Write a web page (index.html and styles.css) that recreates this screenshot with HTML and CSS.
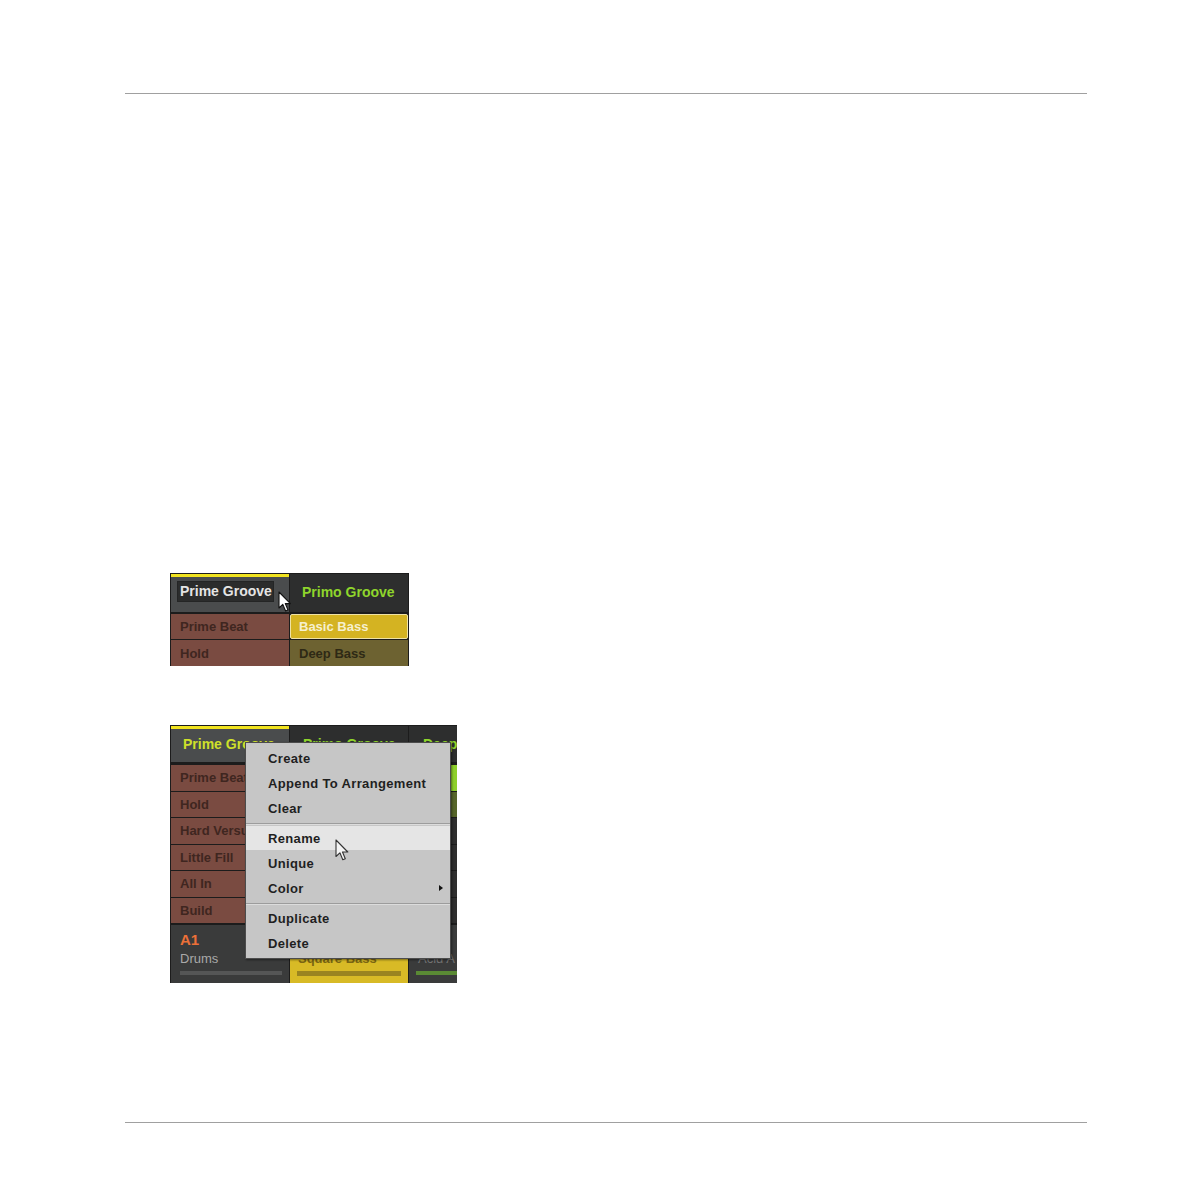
FILE: index.html
```html
<!DOCTYPE html>
<html>
<head>
<meta charset="utf-8">
<link rel="stylesheet" href="styles.css">
</head>
<body>
<div class="page">
  <div class="rule rule-top"></div>

  <div class="shot shot1">
    <div class="col c1">
      <div class="hd hd-sel"><span class="field">Prime Groove</span></div>
      <div class="cell brown r1">Prime Beat</div>
      <div class="cell brown r2">Hold</div>
    </div>
    <div class="col c2">
      <div class="hd hd-dark"><span class="hname green">Primo Groove</span></div>
      <div class="cell yellow-sel r1">Basic Bass</div>
      <div class="cell olive r2">Deep Bass</div>
    </div>
    <svg class="cursor cursor1" width="14" height="22" viewBox="0 0 14 22"><path d="M1 1 L1 17 L4.8 13.4 L7.6 20 L10 19 L7.3 12.6 L12.4 12.6 Z" fill="#fff" stroke="#111" stroke-width="1.1" stroke-linejoin="round"/></svg>
  </div>

  <div class="shot shot2">
    <div class="col k1">
      <div class="hd2 hd-sel"><span class="hname lime">Prime Groove</span></div>
      <div class="rows">
        <div class="cell2 brown">Prime Beat</div>
        <div class="cell2 brown">Hold</div>
        <div class="cell2 brown">Hard Versus</div>
        <div class="cell2 brown">Little Fill</div>
        <div class="cell2 brown">All In</div>
        <div class="cell2 brown">Build</div>
      </div>
      <div class="grp grp-dark">
        <span class="gname orange">A1</span>
        <span class="gsub">Drums</span>
        <span class="gbar gbar-gray"></span>
      </div>
    </div>
    <div class="col k2">
      <div class="hd2 hd-dark"><span class="hname green">Primo Groove</span></div>
      <div class="rows">
        <div class="cell2 yellow">Basic Bass</div>
        <div class="cell2 olive">Deep Bass</div>
        <div class="cell2 dark"></div>
        <div class="cell2 dark"></div>
        <div class="cell2 dark"></div>
        <div class="cell2 dark"></div>
      </div>
      <div class="grp grp-yellow">
        <span class="gname dim">B1</span>
        <span class="gsub sq">Square Bass</span>
        <span class="gbar gbar-olive"></span>
      </div>
    </div>
    <div class="col k3">
      <div class="hd2 hd-dark"><span class="hname green">Deep</span></div>
      <div class="rows">
        <div class="cell2 bright"></div>
        <div class="cell2 olive-g"></div>
        <div class="cell2 dark"></div>
        <div class="cell2 dark"></div>
        <div class="cell2 dark"></div>
        <div class="cell2 dark"></div>
      </div>
      <div class="grp grp-dark">
        <span class="gname dim2">C1</span>
        <span class="gsub acid">Acid A</span>
        <span class="gbar gbar-green"></span>
      </div>
    </div>

    <div class="menu">
      <div class="item">Create</div>
      <div class="item">Append To Arrangement</div>
      <div class="item">Clear</div>
      <div class="sep"></div>
      <div class="item item-hi">Rename</div>
      <div class="item">Unique</div>
      <div class="item item-sub">Color<span class="tri"></span></div>
      <div class="sep"></div>
      <div class="item">Duplicate</div>
      <div class="item">Delete</div>
    </div>
    <svg class="cursor cursor2" width="15" height="23" viewBox="0 0 15 23"><path d="M1 1 L1 17.5 L4.9 13.8 L7.8 20.8 L10.3 19.8 L7.5 13 L12.8 13 Z" fill="#f4f4f4" stroke="#333" stroke-width="1.1" stroke-linejoin="round"/></svg>
  </div>

  <div class="rule rule-bottom"></div>
</div>
</body>
</html>
```

FILE: styles.css
```css
html, body {
  margin: 0;
  padding: 0;
  background: #ffffff;
}
body {
  font-family: "Liberation Sans", Arial, sans-serif;
  width: 1191px;
  height: 1191px;
  overflow: hidden;
}
.page {
  display: flex;
  flex-direction: column;
}
.rule {
  height: 1px;
  background: #a0a0a0;
  margin-left: 125px;
  width: 962px;
}
.rule-top {
  margin-top: 93px;
}
.rule-bottom {
  margin-top: 139px;
}

/* ---------- shared ---------- */
.shot {
  position: relative;
  margin-left: 170px;
  background: #1c1c1c;
  display: flex;
  gap: 1px;
  padding-left: 1px;
  padding-top: 1px;
  box-sizing: border-box;
  overflow: hidden;
}
.col {
  display: flex;
  flex-direction: column;
}
.hname {
  font-weight: bold;
  font-size: 14px;
  white-space: nowrap;
}
.green { color: #8fd52c; }
.lime { color: #cfe02a; }
.orange { color: #ec7038; }

.brown { background: #7a4b41; color: #3f2620; }
.olive { background: #6d6231; color: #2e2915; }
.dark { background: #2e2e2e; }
.bright { background: #8dcf2b; }
.olive-g { background: #56652a; }
.yellow { background: #d7b624; color: #f5efc9; }

.hd-sel {
  background: #4a4c4d;
  border-top: 3px solid #f1e31f;
  box-sizing: border-box;
}
.hd-dark {
  background: #2d2e2e;
}

/* ---------- shot 1 ---------- */
.shot1 {
  margin-top: 479px;
  width: 239px;
  height: 93px;
  padding-right: 1px;
}
.shot1 .col {
  width: 118px;
}
.shot1 .hd {
  height: 38px;
  margin-bottom: 2px;
  display: flex;
  align-items: center;
  box-sizing: border-box;
}
.shot1 .hd-sel {
  align-items: flex-start;
}
.field {
  margin-top: 4px;
  margin-left: 6px;
  width: 97px;
  height: 21px;
  box-sizing: border-box;
  background: #2b2c2c;
  border: 1px solid #242525;
  color: #e4e4e4;
  font-weight: bold;
  font-size: 14px;
  line-height: 19px;
  padding-left: 2px;
  white-space: nowrap;
  overflow: hidden;
}
.shot1 .hd-dark {
  padding-bottom: 2px;
}
.shot1 .hd-dark .hname {
  margin-left: 12px;
}
.cell {
  font-weight: bold;
  font-size: 13px;
  padding-left: 9px;
  display: flex;
  align-items: center;
  white-space: nowrap;
  overflow: hidden;
  box-sizing: border-box;
}
.cell.r1 { height: 25px; margin-bottom: 1px; }
.cell.r2 { height: 26px; }
.yellow-sel {
  background: #d4b322;
  color: #f6f0cf;
  border: 1px solid #efe2a4;
  border-radius: 2px;
  padding-left: 8px;
}
.cursor {
  position: absolute;
}
.cursor1 {
  left: 108px;
  top: 18px;
}

/* ---------- shot 2 ---------- */
.shot2 {
  margin-top: 59px;
  width: 287px;
  height: 258px;
}
.k1, .k2 { width: 118px; }
.k3 { width: 48px; }
.hd2 {
  height: 36px;
  margin-bottom: 3px;
  display: flex;
  align-items: center;
  padding-left: 13px;
  box-sizing: border-box;
  overflow: hidden;
}
.k1 .hd2 { padding-left: 12px; padding-bottom: 4px; }
.k3 .hd2 { padding-left: 14px; }
.rows {
  height: 158px;
  display: grid;
  grid-template-rows: repeat(6, 1fr);
  row-gap: 1px;
  margin-bottom: 2px;
}
.cell2 {
  font-weight: bold;
  font-size: 13px;
  padding-left: 9px;
  display: flex;
  align-items: center;
  white-space: nowrap;
  overflow: hidden;
}
.grp {
  flex: 1;
  position: relative;
  display: flex;
  flex-direction: column;
  padding-left: 9px;
  overflow: hidden;
  white-space: nowrap;
}
.grp-dark { background: #3a3b3b; }
.grp-yellow { background: #d8ba26; padding-left: 8px; }
.gname {
  font-weight: bold;
  font-size: 15px;
  margin-top: 7px;
  line-height: 16px;
}
.dim { color: #8c7616; }
.dim2 { color: #6b6b6b; }
.gsub {
  font-size: 13px;
  color: #a9a9a9;
  margin-top: 3px;
  line-height: 15px;
}
.sq { color: #7a6612; font-weight: bold; }
.acid { color: #737373; }
.gbar {
  position: absolute;
  left: 9px;
  right: 7px;
  top: 46px;
  height: 4px;
}
.gbar-gray { background: #555656; }
.gbar-olive { left: 7px; right: 7px; height: 5px; background: #9a8420; }
.gbar-green { left: 6px; right: 0; background: #5a8a34; border-left: 1px solid #3b3b3b; }

/* ---------- menu ---------- */
.menu {
  position: absolute;
  left: 75px;
  top: 17px;
  width: 206px;
  height: 217px;
  box-sizing: border-box;
  background: #c6c6c6;
  border: 1px solid #4c4c4c;
  box-shadow: 1px 1px 2px rgba(0, 0, 0, 0.45);
  padding-top: 3px;
  display: flex;
  flex-direction: column;
}
.item {
  height: 25px;
  display: flex;
  align-items: center;
  padding-left: 22px;
  font-weight: bold;
  font-size: 13px;
  letter-spacing: 0.35px;
  color: #1f1f1f;
  white-space: nowrap;
  position: relative;
}
.item-hi {
  background: #e5e5e5;
  height: 24px;
  margin-bottom: 1px;
}
.sep {
  height: 5px;
  box-sizing: border-box;
  border-top: 2px solid #c6c6c6;
  border-bottom: 1px solid #c6c6c6;
  background: linear-gradient(#9c9c9c 0 1px, #dcdcdc 1px 2px);
}
.tri {
  position: absolute;
  right: 7px;
  top: 9px;
  width: 0;
  height: 0;
  border-top: 3.5px solid transparent;
  border-bottom: 3.5px solid transparent;
  border-left: 4px solid #111;
}
.cursor2 {
  left: 165px;
  top: 114px;
}
```
